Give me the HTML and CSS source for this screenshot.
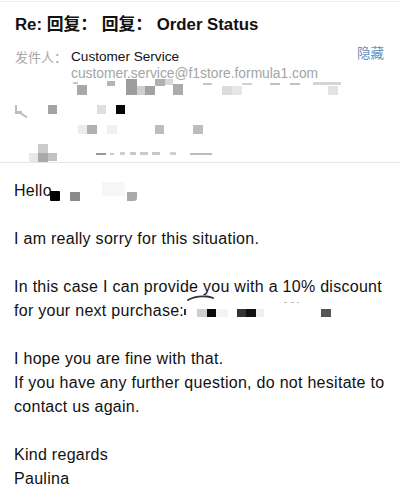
FILE: index.html
```html
<!DOCTYPE html>
<html>
<head>
<meta charset="utf-8">
<link rel="stylesheet" href="styles.css">
</head>
<body>
<div class="page">
  <header class="header">
    <h1 class="subject">Re: 回复： 回复： Order Status</h1>
    <div class="from-row">
      <span class="label">发件人：</span>
      <div class="from-info">
        <div class="name">Customer Service</div>
        <div class="email">customer.service@f1store.formula1.com</div>
      </div>
      <span class="hide">隐藏</span>
    </div>
  </header>
  <svg class="mosaic" width="400" height="83" viewBox="0 80 400 83">
    <rect x="73" y="83" width="5" height="2" fill="#c8c8c8"/>
    <rect x="77" y="86" width="10" height="10" fill="#a8a8a8"/>
    <rect x="107" y="82" width="8" height="5" fill="#b5b5b5"/>
    <rect x="126" y="80" width="11" height="16" fill="#9d9d9d"/>
    <rect x="137" y="87" width="8" height="9" fill="#cfcfcf"/>
    <rect x="145" y="87" width="10" height="9" fill="#a2a2a2"/>
    <rect x="155" y="80" width="10" height="7" fill="#b0b0b0"/>
    <rect x="165" y="80" width="8" height="6" fill="#d8d8d8"/>
    <rect x="173" y="85" width="10" height="11" fill="#ababab"/>
    <rect x="203" y="84" width="9" height="2" fill="#c5c5c5"/>
    <rect x="222" y="87" width="10" height="9" fill="#dcdcdc"/>
    <rect x="232" y="87" width="10" height="9" fill="#e6e6e6"/>
    <rect x="242" y="84" width="10" height="2" fill="#d0d0d0"/>
    <rect x="270" y="84" width="10" height="2" fill="#c0c0c0"/>
    <rect x="290" y="84" width="10" height="2" fill="#c0c0c0"/>
    <rect x="313" y="83" width="28" height="3" fill="#d5d5d5"/>
    <rect x="328" y="87" width="10" height="9" fill="#e2e2e2"/>
    <path d="M15 106 L17 106 L17 112 L22 112 L22 114 L28 118 L26 119 L20 115 L15 115 Z" fill="#bdbdbd"/>
    <rect x="48" y="106" width="9" height="9" fill="#a3a3a3"/>
    <rect x="97" y="106" width="9" height="9" fill="#dedede"/>
    <rect x="116" y="106" width="9" height="9" fill="#050505"/>
    <rect x="78" y="126" width="9" height="9" fill="#ececec"/>
    <rect x="87" y="126" width="10" height="9" fill="#b0b0b0"/>
    <rect x="107" y="126" width="10" height="9" fill="#f0f0f0"/>
    <rect x="155" y="126" width="9" height="9" fill="#bdbdbd"/>
    <rect x="193" y="126" width="10" height="9" fill="#bdbdbd"/>
    <rect x="38" y="145" width="10" height="9" fill="#cacaca"/>
    <rect x="29" y="154" width="9" height="9" fill="#e8e8e8"/>
    <rect x="38" y="154" width="10" height="9" fill="#a9a9a9"/>
    <rect x="48" y="154" width="9" height="8" fill="#c2c2c2"/>
    <rect x="96" y="154" width="10" height="2" fill="#999"/>
    <rect x="110" y="154" width="4" height="2" fill="#c8c8c8"/>
    <rect x="120" y="153" width="5" height="3" fill="#d0d0d0"/>
    <rect x="130" y="153" width="6" height="3" fill="#c8c8c8"/>
    <rect x="140" y="153" width="8" height="3" fill="#c8c8c8"/>
    <rect x="152" y="153" width="8" height="3" fill="#c8c8c8"/>
    <rect x="170" y="153" width="6" height="3" fill="#d0d0d0"/>
    <rect x="190" y="154" width="22" height="2" fill="#bbb"/>
  </svg>
  <main class="content">
    <p>Hello<svg class="redact-hello" width="92" height="24" viewBox="0 0 92 24"><rect x="3" y="12" width="10" height="10" rx="1" fill="#000"/><rect x="23" y="13" width="10" height="9" fill="#8a8a8a"/><rect x="55" y="3" width="23" height="14" fill="#f6f6f6"/><path d="M80 13 H90 V19 Q90 22 87 22 H80 Z" fill="#a8a8a8"/></svg></p>
    <p>I am really sorry for this situation.</p>
    <p class="offer"><svg class="smudge-mark" width="28" height="8" viewBox="0 0 28 8"><path d="M1 6 Q8 1.5 20 2.5 Q24 3 26 4" stroke="#333" stroke-width="1.8" fill="none" stroke-linecap="round"/></svg>In this case I can provide you with a 10% discount for your next purchase:<svg class="redact-code" width="150" height="24" viewBox="0 0 150 24"><rect x="0" y="10" width="2" height="6" fill="#333"/><rect x="13" y="10" width="10" height="8" fill="#cfcfcf"/><rect x="23" y="10" width="9" height="8" fill="#0a0a0a"/><rect x="32" y="10" width="12" height="8" fill="#f4f4f4"/><rect x="53" y="10" width="9" height="8" fill="#333"/><rect x="62" y="10" width="10" height="8" fill="#111"/><rect x="72" y="10" width="8" height="8" fill="#efefef"/><rect x="100" y="3" width="3" height="1" fill="#bbb"/><rect x="107" y="3" width="3" height="1" fill="#bbb"/><rect x="113" y="3" width="2" height="1" fill="#bbb"/><rect x="137" y="10" width="10" height="8" fill="#555"/></svg></p>
    <p>I hope you are fine with that.<br>If you have any further question, do not hesitate to contact us again.</p>
    <p>Kind regards<br>Paulina</p>
  </main>
</div>
</body>
</html>
```

FILE: styles.css
```css
html, body {
  margin: 0;
  padding: 0;
  background: #fff;
}
body {
  font-family: "Liberation Sans", Arial, "Noto Sans CJK SC", sans-serif;
  color: #111;
}
.page {
  width: 400px;
  border-top: 1px solid #ececec;
  margin-top: 1px;
}
.header {
  padding: 0 16px 0 15px;
}
.subject {
  margin: 12px 0 0;
  font-size: 16.8px;
  line-height: 22px;
  font-weight: bold;
  color: #111;
  font-family: "Liberation Sans", "Noto Sans CJK SC", sans-serif;
}
.from-row {
  display: flex;
  align-items: flex-start;
  margin-top: 13px;
}
.label {
  width: 56px;
  font-family: "Noto Sans CJK SC", sans-serif;
  font-size: 13px;
  line-height: 16px;
  color: #a8a8a8;
}
.from-info {
  flex: 1;
}
.name {
  font-size: 13.6px;
  line-height: 16px;
  color: #111;
}
.email {
  font-size: 13.8px;
  line-height: 17px;
  color: #a4a4a4;
}
.hide {
  font-family: "Noto Sans CJK SC", sans-serif;
  font-size: 13.5px;
  line-height: 16px;
  color: #6a8fbb;
  margin-top: -5px;
}
.mosaic {
  display: block;
  margin-top: -3px;
  border-bottom: 1px solid #e8e8e8;
}
.content {
  padding: 16px 8px 0 14px;
  font-size: 16px;
  line-height: 24px;
  letter-spacing: 0.28px;
}
.content p {
  margin: 0 0 24px;
}
.offer {
  position: relative;
}
.smudge-mark {
  position: absolute;
  left: 173px;
  top: 19px;
  display: block;
}
.redact-hello {
  vertical-align: top;
  margin-left: -5px;
}
.redact-code {
  vertical-align: top;
  margin-left: 0;
}
```
